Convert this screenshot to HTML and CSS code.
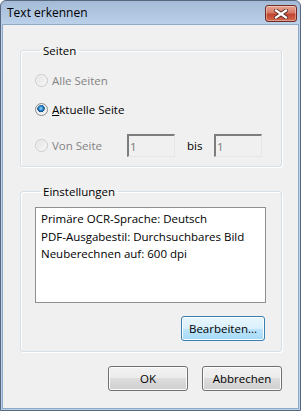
FILE: index.html
```html
<!DOCTYPE html>
<html lang="de">
<head>
    <meta charset="UTF-8">
    <title>Text erkennen</title>
    <link rel="stylesheet" href="styles.css">
</head>
<body>

    <div class="window">
        <div class="titlebar">
            <span class="title">Text erkennen</span>
            <button class="close" type="button">
                <svg width="14" height="10" viewBox="0 0 14 10">
                    <path d="M2 1.5 L12 8.5 M12 1.5 L2 8.5" stroke="#5b2a22" stroke-width="4" stroke-linecap="square"/>
                    <path d="M2 1.5 L12 8.5 M12 1.5 L2 8.5" stroke="#fff" stroke-width="2.2" stroke-linecap="square"/>
                </svg>
            </button>
        </div>

        <div class="client">
            <fieldset class="group group-pages">
                <legend>Seiten</legend>
                <label class="radio disabled"><span class="dot"></span>Alle Seiten</label>
                <label class="radio checked"><span class="dot"></span><u>A</u>ktuelle Seite</label>
                <div class="range">
                    <label class="radio disabled range-label"><span class="dot"></span>Von Seite</label>
                    <input class="num" type="text" value="1" disabled>
                    <span class="bis">bis</span>
                    <input class="num" type="text" value="1" disabled>
                </div>
            </fieldset>

            <fieldset class="group group-settings">
                <legend>Einstellungen</legend>
                <div class="summary">
                    <div>Primäre OCR-Sprache: Deutsch</div>
                    <div>PDF-Ausgabestil: Durchsuchbares Bild</div>
                    <div>Neuberechnen auf: 600 dpi</div>
                </div>
                <div class="edit-row">
                    <button class="btn hot" type="button">Bearbeiten...</button>
                </div>
            </fieldset>

            <div class="actions">
                <button class="btn" type="button">OK</button>
                <button class="btn" type="button">Abbrechen</button>
            </div>
        </div>
    </div>

</body>
</html>
```

FILE: styles.css
```css
body {
    margin: 0;
    font-family: "Open Sans", "Noto Sans", sans-serif;
    font-size: 11.5px;
    color: #000;
    background-color: #fff;
}
.window {
    width: 301px;
    height: 411px;
    box-sizing: border-box;
    border: 1px solid #56677e;
    border-radius: 6px 6px 0 0;
    background: linear-gradient(#a4bbd7, #bcd1ea 24px, #b9d0ea);
    display: flex;
    flex-direction: column;
}
.titlebar {
    height: 23px;
    display: flex;
    align-items: flex-start;
    justify-content: space-between;
    padding: 0 3px 0 6px;
}
.title {
    font-size: 12px;
    line-height: 23px;
    color: #000;
}
.close {
    width: 32px;
    height: 17px;
    margin-top: 4px;
    padding: 0;
    border: 1px solid #6e2c24;
    border-radius: 3px;
    background: linear-gradient(#e8a493, #d57a66 45%, #c2442f 55%, #d26a4f);
    box-shadow: inset 0 0 0 1px rgba(255, 255, 255, 0.35);
    display: flex;
    align-items: center;
    justify-content: center;
}
.client {
    flex: 1;
    margin: 0 1px 1px 1px;
    border: 1px solid #8fa9c9;
    background-color: #f0f0f0;
    display: flex;
    flex-direction: column;
}
.group {
    margin: 0 16px 0 17px;
    padding: 0 15px 0 14px;
    border: 1px solid #d5dfe5;
    border-radius: 3px;
    box-shadow: inset 1px 1px 0 #fff, 1px 1px 0 #fff;
    min-inline-size: 0;
}
.group legend {
    margin-left: 5px;
    padding: 2px 3px 0 3px;
    font-size: 11.5px;
    line-height: 16px;
}
.group-pages {
    margin-top: 16px;
    padding-top: 13px;
    padding-bottom: 9px;
}
.group-settings {
    margin-top: 15px;
    padding-top: 7px;
    padding-bottom: 10px;
}
.radio {
    display: flex;
    align-items: center;
    line-height: 17px;
    height: 17px;
}
.radio + .radio {
    margin-top: 12px;
}
.radio .dot {
    width: 11px;
    height: 11px;
    margin-right: 4px;
    border-radius: 50%;
    border: 1px solid #b9b9b9;
    background: linear-gradient(135deg, #dcdcdc, #f8f8f8);
    box-shadow: inset 0 0 0 1px #f4f4f4;
}
.radio.disabled {
    color: #838383;
}
.radio.disabled .dot {
    border-color: #cacaca;
    background: linear-gradient(135deg, #e3e3e3, #f6f6f6);
}
.radio.checked .dot {
    border-color: #8a8a8a;
    background: radial-gradient(circle at 45% 40%, #a6dcf8 0, #2d8bd0 2px, #104a85 3.5px, #e6e6e6 4px, #f8f8f8 6px);
}
.radio u {
    text-decoration: underline;
}
.range {
    margin-top: 16px;
    display: flex;
    align-items: center;
    height: 23px;
}
.range-label {
    width: 92px;
}
.num {
    width: 48px;
    height: 23px;
    box-sizing: border-box;
    margin: 0;
    padding: 0 0 0 1px;
    border-style: solid;
    border-width: 2px 1px 1px 2px;
    border-color: #7d7d7d #e6e6e6 #e6e6e6 #7d7d7d;
    background-color: #f0f0f0;
    color: #7a7a7a;
    font-family: inherit;
    font-size: 11.5px;
}
.bis {
    width: 39px;
    box-sizing: border-box;
    padding-left: 12px;
}
.summary {
    height: 96px;
    box-sizing: border-box;
    border: 1px solid #8e8f8f;
    background-color: #fff;
    padding: 2px 5px;
    line-height: 17.5px;
}
.edit-row {
    margin-top: 13px;
    display: flex;
    justify-content: flex-end;
    padding-right: 1px;
}
.btn {
    width: 80px;
    height: 25px;
    padding: 0;
    border: 1px solid #707070;
    border-radius: 3px;
    background: linear-gradient(#f2f2f2, #ebebeb 50%, #dddddd 50%, #cfcfcf);
    box-shadow: inset 0 0 0 1px #fcfcfc;
    font-family: inherit;
    font-size: 11.5px;
    color: #000;
}
.btn.hot {
    width: 84px;
    border-color: #3c7fb1;
    background: linear-gradient(#eaf6fd, #d9f0fc 50%, #bee6fd 50%, #a7d9f5);
}
.actions {
    margin-top: 14px;
    display: flex;
    justify-content: flex-end;
    gap: 14px;
    padding-right: 16px;
}
```
